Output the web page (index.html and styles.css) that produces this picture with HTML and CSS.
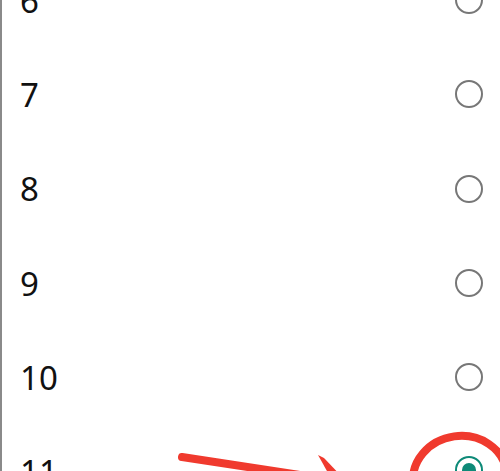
FILE: index.html
```html
<!doctype html>
<html lang="en">
  <head>
    <meta charset="UTF-8" />
    <meta name="viewport" content="width=device-width, initial-scale=1.0" />
    <title>Select a value</title>
    <link rel="stylesheet" href="styles.css">
  </head>
  <body>
    <div class="sheet">
      <ul class="option-list">
        <li class="option"><span class="label">6</span><span class="radio"></span></li>
        <li class="option"><span class="label">7</span><span class="radio"></span></li>
        <li class="option"><span class="label">8</span><span class="radio"></span></li>
        <li class="option"><span class="label">9</span><span class="radio"></span></li>
        <li class="option"><span class="label">10</span><span class="radio"></span></li>
        <li class="option"><span class="label">11</span><span class="radio checked"></span></li>
      </ul>

      <!-- red hand-drawn annotation -->
      <svg class="markup" width="500" height="471" viewBox="0 0 500 471">
        <line x1="182" y1="457" x2="300" y2="475" stroke="#f03a2e" stroke-width="8" stroke-linecap="round" />
        <polygon points="318,455 324,458 345,480 332,480" fill="#f03a2e" />
        <ellipse cx="460" cy="478" rx="47" ry="42" fill="none" stroke="#f03a2e" stroke-width="8" transform="rotate(-8 460 478)" />
      </svg>
    </div>
  </body>
</html>
```

FILE: styles.css
```css
body {
  margin: 0;
  width: 500px;
  height: 471px;
  overflow: hidden;
  background-color: #fff;
  font-family: "Noto Sans", "Open Sans", sans-serif;
  color: #111;
}
.sheet {
  position: relative;
  height: 471px;
  border-left: 2px solid #8a8a8a;
  overflow: hidden;
}
.option-list {
  list-style: none;
  margin: -47px 0 0 0;
  padding: 0;
}
.option {
  height: 94.3px;
  display: flex;
  align-items: center;
  justify-content: space-between;
  padding: 0 17px 0 18px;
}
.label {
  font-size: 33px;
  line-height: 1;
}
.radio {
  width: 24px;
  height: 24px;
  border: 2.5px solid #777;
  border-radius: 50%;
  display: flex;
  justify-content: center;
  align-items: center;
}
.radio.checked {
  border-color: #0e8a78;
  margin-top: -4px;
}
.radio.checked::after {
  content: "";
  width: 14px;
  height: 14px;
  border-radius: 50%;
  background-color: #0e8a78;
}
.markup {
  position: absolute;
  top: 0;
  left: -2px;
}
```
